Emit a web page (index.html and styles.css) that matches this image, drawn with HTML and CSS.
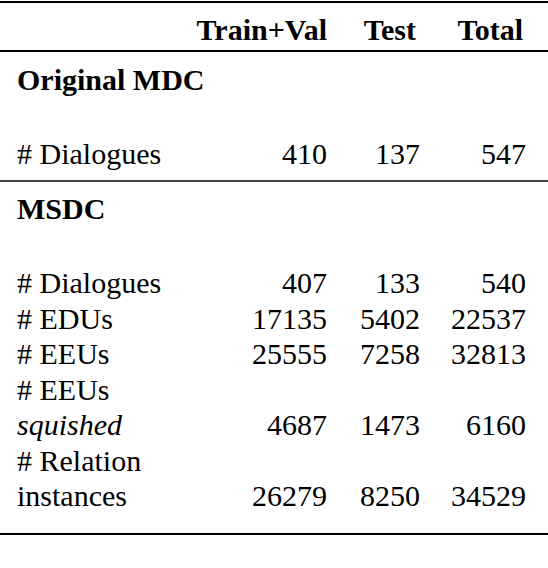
FILE: index.html
```html
<!DOCTYPE html>
<html lang="en">
<head>
    <meta charset="UTF-8">
    <meta name="viewport" content="width=device-width, initial-scale=1.0">
    <title>Dataset statistics</title>
    <link rel="stylesheet" href="styles.css">
</head>
<body>
    <table class="stats">
        <colgroup>
            <col class="c-label">
            <col class="c-train">
            <col class="c-test">
            <col class="c-total">
        </colgroup>
        <thead>
            <tr class="head">
                <th></th>
                <th>Train+Val</th>
                <th class="mid">Test</th>
                <th class="mid">Total</th>
            </tr>
        </thead>
        <tbody class="group">
            <tr class="section"><td colspan="4">Original MDC</td></tr>
            <tr class="gap"><td colspan="4"></td></tr>
            <tr class="last"><td># Dialogues</td><td>410</td><td>137</td><td>547</td></tr>
        </tbody>
        <tbody class="group end">
            <tr class="section"><td colspan="4">MSDC</td></tr>
            <tr class="gap"><td colspan="4"></td></tr>
            <tr><td># Dialogues</td><td>407</td><td>133</td><td>540</td></tr>
            <tr><td># EDUs</td><td>17135</td><td>5402</td><td>22537</td></tr>
            <tr><td># EEUs</td><td>25555</td><td>7258</td><td>32813</td></tr>
            <tr><td># EEUs</td><td></td><td></td><td></td></tr>
            <tr><td><i>squished</i></td><td>4687</td><td>1473</td><td>6160</td></tr>
            <tr><td># Relation</td><td></td><td></td><td></td></tr>
            <tr class="last"><td>instances</td><td>26279</td><td>8250</td><td>34529</td></tr>
        </tbody>
    </table>
</body>
</html>
```

FILE: styles.css
```css
*{
    padding: 0;
    margin: 0;
}
body{
    background: #fff;
    color: #000;
    font-family: "Liberation Serif", serif;
    font-size: 30px;
}
.stats{
    width: 548px;
    margin-top: 1px;
    border-collapse: collapse;
    table-layout: fixed;
}
.c-label{ width: 190px; }
.c-train{ width: 137px; }
.c-test{ width: 93px; }
.c-total{ width: 128px; }

.stats th,
.stats td{
    line-height: 35.5px;
    text-align: right;
    white-space: nowrap;
}
.stats th:first-child,
.stats td:first-child{
    text-align: left;
    padding-left: 17px;
}
.stats th:last-child,
.stats td:last-child{
    padding-right: 22px;
}

/* header row, labels centred over the number column */
.head{
    border-top: 2px solid #000;
    border-bottom: 2px solid #000;
}
.head th{
    line-height: 36px;
    padding-top: 9px;
    padding-bottom: 2px;
    font-weight: bold;
}
.head th.mid{
    padding-right: 4px;
}
.head th.mid:last-child{
    padding-right: 25px;
}

.section td{
    line-height: 36px;
    font-weight: bold;
    padding-top: 10px;
}
.group.end .section td{
    padding-top: 9px;
}
.gap td{
    height: 38px;
}
.group .last td{
    line-height: 36px;
    padding-bottom: 8px;
}
.group{
    border-bottom: 2px solid #444;
}
.group.end{
    border-bottom: 2px solid #000;
}
.group.end .last td{
    line-height: 35.5px;
    padding-bottom: 19.5px;
}
```
